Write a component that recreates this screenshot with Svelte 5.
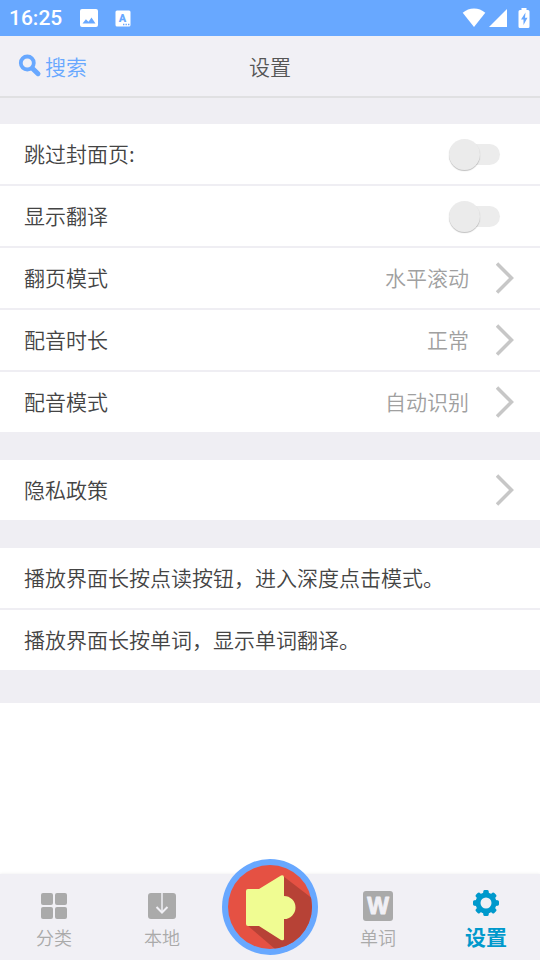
<script>
  let skipCover = $state(false);
  let showTranslation = $state(false);
  let activeTab = $state('settings');

  const options = [
    { label: '翻页模式', value: '水平滚动' },
    { label: '配音时长', value: '正常' },
    { label: '配音模式', value: '自动识别' }
  ];

  const tips = ['播放界面长按点读按钮，进入深度点击模式。', '播放界面长按单词，显示单词翻译。'];
  const teeth = [0, 45, 90, 135, 180, 225, 270, 315];
</script>

{#snippet chevron()}
  <svg class="chevron" width="18" height="32" viewBox="0 0 18 32" aria-hidden="true">
    <path d="M1 1.500 15.500 16 1 30.500" fill="none" stroke="#c7c7c7" stroke-width="3.500" />
  </svg>
{/snippet}

<div class="page">
  <div class="status-bar">
    <span class="clock">16:25</span>
    <svg width="18" height="18" viewBox="0 0 18 18" aria-hidden="true">
      <path fill="#fff" fill-rule="evenodd" d="M2 0h14a2 2 0 0 1 2 2v14a2 2 0 0 1-2 2H2a2 2 0 0 1-2-2V2a2 2 0 0 1 2-2ZM2.500 14.500h13L11.500 8.500l-3 4.300-2.600-2.600Z" />
    </svg>
    <svg class="lang-icon" width="16" height="17" viewBox="0 0 16 17" aria-hidden="true">
      <rect width="15" height="16" x="0.500" y="0.500" rx="1.500" fill="#fff" />
      <text x="7.500" y="12" text-anchor="middle" font-size="11" font-weight="900" fill="#68a8ff">A</text>
      <path d="M8 14.500h1.400M10.500 14.500h1.400M13 14.500h1.400" stroke="#68a8ff" stroke-width="1.400" />
    </svg>
    <div class="signals">
      <svg width="24" height="20" viewBox="0 0 24 20" aria-hidden="true">
        <path fill="#fff" d="M12 19 .7 4.800C4 2 7.800.500 12 .500S20 2 23.300 4.800Z" />
      </svg>
      <svg width="18" height="20" viewBox="0 0 18 20" aria-hidden="true">
        <path fill="#fff" d="M0 19 18 1v18Z" />
      </svg>
      <svg class="battery" width="12" height="20" viewBox="0 0 12 20" aria-hidden="true">
        <path fill="#fff" d="M3.500 0h5v2H10a1.500 1.500 0 0 1 1.500 1.500v15A1.500 1.500 0 0 1 10 20H2a1.500 1.500 0 0 1-1.500-1.500v-15A1.500 1.500 0 0 1 2 2h1.500Z" />
        <path fill="#68a8ff" d="M7.500 4.500 3 11.500h2.500v5.500L9.500 9.800H7Z" />
      </svg>
    </div>
  </div>

  <header>
    <button class="search" type="button">
      <svg width="24" height="24" viewBox="0 0 24 24" aria-hidden="true">
        <circle cx="9.300" cy="9" r="6.500" fill="none" stroke="#68a8ff" stroke-width="3.800" />
        <path d="m14.800 14.700 5.200 5" stroke="#68a8ff" stroke-width="5" stroke-linecap="round" />
      </svg>
      <span>搜索</span>
    </button>
    <h1>设置</h1>
  </header>

  <main>
    <section>
      <label class="row row--switch">
        <span>跳过封面页:</span>
        <input type="checkbox" bind:checked={skipCover} />
      </label>
      <label class="row row--switch">
        <span>显示翻译</span>
        <input type="checkbox" bind:checked={showTranslation} />
      </label>
      {#each options as option}
        <button class="row" type="button">
          <span>{option.label}</span>
          <span class="value">{option.value}</span>
          {@render chevron()}
        </button>
      {/each}
    </section>

    <section>
      <a class="row" href="#privacy">
        <span>隐私政策</span>
        {@render chevron()}
      </a>
    </section>

    <section>
      {#each tips as tip}
        <p class="row"><span>{tip}</span></p>
      {/each}
    </section>
  </main>

  <nav>
    <button class="tab" class:active={activeTab === 'category'} type="button" onclick={() => (activeTab = 'category')}>
      <svg width="32" height="32" viewBox="0 0 32 32" fill="#aaa" aria-hidden="true">
        <rect x="3" y="3" width="12" height="12" rx="2" />
        <rect x="17" y="3" width="12" height="12" rx="2" />
        <rect x="3" y="17" width="12" height="12" rx="2" />
        <rect x="17" y="17" width="12" height="12" rx="2" />
      </svg>
      分类
    </button>
    <button class="tab" class:active={activeTab === 'local'} type="button" onclick={() => (activeTab = 'local')}>
      <svg width="32" height="32" viewBox="0 0 32 32" aria-hidden="true">
        <rect x="2" y="3" width="28" height="26" rx="3" fill="#aaa" />
        <path d="M16 3v19" stroke="#dedee2" stroke-width="2" />
        <path d="m10.500 17 5.500 5.500 5.500-5.500" fill="none" stroke="#f1f0f5" stroke-width="2" />
      </svg>
      本地
    </button>
    <button class="play" type="button" aria-label="点读">
      <svg viewBox="0 0 96 96" aria-hidden="true">
        <defs>
          <clipPath id="disc"><circle cx="48" cy="48" r="42" /></clipPath>
        </defs>
        <circle cx="48" cy="48" r="48" fill="#68a8ff" />
        <circle cx="48" cy="48" r="42" fill="#e55143" />
        <path clip-path="url(#disc)" fill="#b74236" d="M61 17 96 44v52H60L25 66Z" />
        <path fill="#f0fc92" d="M26 30h11l22-13.500q3-1 3 2V37a11.500 11.500 0 0 1 0 23v20q0 2-3 1L37 67H26q-2 0-2-2V32q0-2 2-2Z" />
      </svg>
    </button>
    <button class="tab" class:active={activeTab === 'words'} type="button" onclick={() => (activeTab = 'words')}>
      <svg width="32" height="32" viewBox="0 0 32 32" aria-hidden="true">
        <rect x="1" y="1" width="30" height="30" rx="3" fill="#aaa" />
        <text x="16" y="24" text-anchor="middle" font-size="23" font-weight="700" fill="#f1f0f5" stroke="#f1f0f5" stroke-linejoin="round">W</text>
      </svg>
      单词
    </button>
    <button class="tab" class:active={activeTab === 'settings'} type="button" onclick={() => (activeTab = 'settings')}>
      <svg width="32" height="32" viewBox="0 0 32 32" fill="none" stroke="currentColor" aria-hidden="true">
        <circle cx="16" cy="16" r="8" stroke-width="5" />
        {#each teeth as angle}
          <path d="M14.500 7 14.800 4.500h2.400L17.500 7Z" fill="currentColor" stroke-width="3" stroke-linejoin="round" transform="rotate({angle} 16 16)" />
        {/each}
      </svg>
      设置
    </button>
  </nav>
</div>

<style>
  :global(body) {
    margin: 0;
    background: #fff;
  }
  .page {
    display: flex;
    flex-direction: column;
    min-height: 100vh;
    font-family: 'Noto Sans CJK SC', sans-serif;
    font-size: 21px;
    font-weight: 350;
    line-height: 30px;
    color: #444;
  }
  svg {
    display: block;
    flex: none;
  }
  button {
    margin: 0;
    padding: 0;
    border: 0;
    background: none;
    color: inherit;
    font: inherit;
    cursor: pointer;
  }

  .status-bar {
    display: flex;
    align-items: center;
    height: 36px;
    padding: 0 10px 0 9px;
    background: #68a8ff;
    color: #fff;
  }
  .clock {
    margin-right: 18px;
    font-family: Roboto, sans-serif;
    font-weight: 500;
  }
  .lang-icon {
    margin-left: 17px;
  }
  .status-bar text {
    font-family: Roboto, sans-serif;
  }
  .signals {
    display: flex;
    align-items: center;
    gap: 3px;
    margin-left: auto;
  }
  .battery {
    margin-left: 8px;
  }

  header {
    display: grid;
    grid-template-columns: 1fr auto 1fr;
    align-items: center;
    height: 60px;
    padding: 0 18px;
    border-bottom: 2px solid #e0e0e2;
    background: #f1f0f5;
  }
  .search {
    display: flex;
    align-items: center;
    justify-self: start;
    gap: 3px;
    color: #68a8ff;
  }
  h1 {
    margin: 0;
    font-size: 21px;
    font-weight: inherit;
    color: #555;
  }

  main {
    display: flex;
    flex-direction: column;
    gap: 28px;
    padding: 26px 0 33px;
    background: #efeef3;
  }
  section {
    display: flex;
    flex-direction: column;
    gap: 2px;
  }
  .row {
    display: flex;
    align-items: center;
    justify-content: space-between;
    box-sizing: border-box;
    min-height: 60px;
    margin: 0;
    padding: 0 26px 0 24px;
    background: #fff;
    color: inherit;
    text-align: left;
    text-decoration: none;
  }
  .row span {
    padding-bottom: 2px;
  }
  .row--switch {
    padding-right: 40px;
  }
  .value {
    margin-left: auto;
    color: #a0a0a0;
  }
  .value + :global(.chevron) {
    margin-left: 27px;
  }

  input {
    appearance: none;
    position: relative;
    display: flex;
    align-items: center;
    width: 51px;
    height: 31px;
    margin: 0;
    cursor: pointer;
  }
  input::before {
    content: '';
    width: 43px;
    height: 21px;
    margin-left: 8px;
    border-radius: 11px;
    background: #ececec;
  }
  input::after {
    content: '';
    position: absolute;
    left: 0;
    width: 31px;
    height: 31px;
    border-radius: 50%;
    background: #ebebeb;
    box-shadow: 0 1px 1px rgba(0, 0, 0, 0.25);
  }
  input:checked::before {
    background: #b5d4ff;
  }
  input:checked::after {
    left: 20px;
    background: #68a8ff;
  }

  nav {
    display: grid;
    grid-template-columns: repeat(5, 1fr);
    height: 86px;
    margin-top: auto;
    background: #f1f0f5;
    box-shadow: 0 0 3px rgba(0, 0, 0, 0.08);
  }
  .tab {
    display: flex;
    flex-direction: column;
    align-items: center;
    padding-top: 16px;
    font-size: 18px;
    color: #aaa;
  }
  .tab text {
    font-family: 'Liberation Sans', sans-serif;
  }
  .tab.active {
    gap: 2px;
    padding-top: 13px;
    font-size: 21px;
    font-weight: 700;
    color: #0099cc;
  }
  .play {
    justify-self: center;
    width: 96px;
    height: 96px;
    margin-top: -15px;
  }
</style>
